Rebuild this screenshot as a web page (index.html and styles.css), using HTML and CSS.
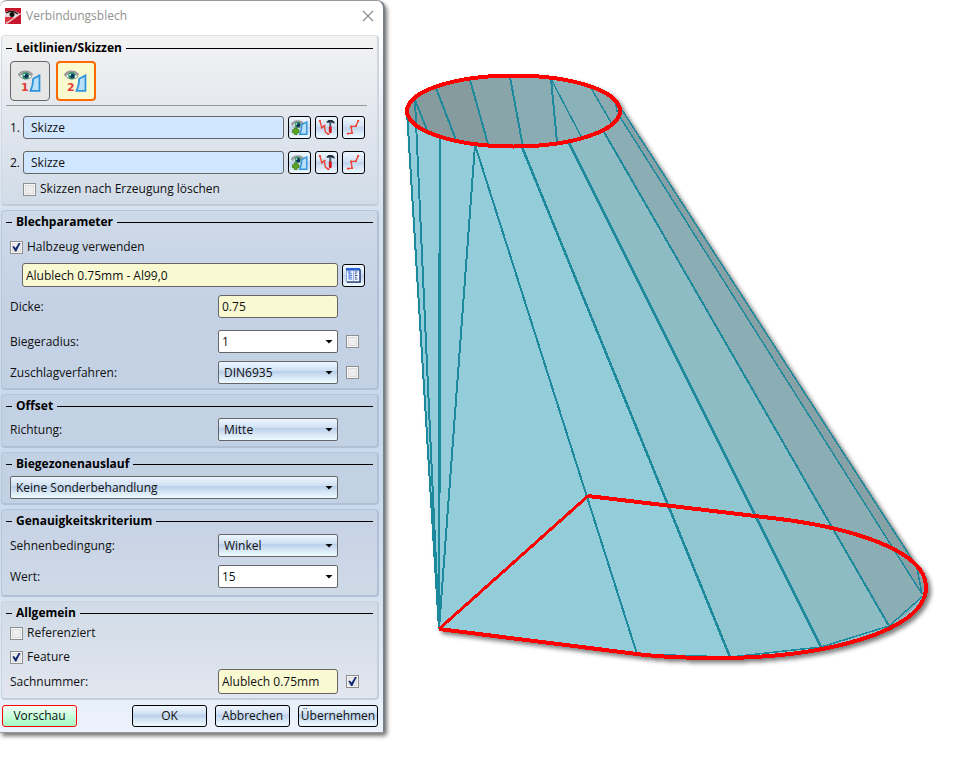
FILE: index.html
```html
<!DOCTYPE html>
<html lang="de">
<head>
<meta charset="utf-8">
<title>Verbindungsblech</title>
<link rel="stylesheet" href="styles.css">
</head>
<body>
<svg class="defs" aria-hidden="true">
  <defs>
    <symbol id="eye" viewBox="0 0 14 9">
      <path d="M0.500 5C3 0.500 10 0 13.500 4.500" fill="none" stroke="#9c9c9c" stroke-width="2"/>
      <path d="M1.500 5.500C4 2 10 2 13 6C10 9 4 9 1.500 5.500Z" fill="#fff" stroke="#66726c" stroke-width=".8"/>
      <circle cx="7.200" cy="5.200" r="3.200" fill="#278b68"/>
      <circle cx="7.700" cy="5.500" r="1.900" fill="#102e64"/>
      <circle cx="5.800" cy="4.300" r=".9" fill="#c9ffe3"/>
    </symbol>
    <symbol id="sheet" viewBox="0 0 11 17">
      <path d="M1.300 16C3 12 3.800 8 3.800 4.500L9.700 1.300V16Z" fill="#b9e0f8" stroke="#2f94dc" stroke-width="1.700"/>
    </symbol>
    <symbol id="pick" viewBox="0 0 18 18">
      <use href="#eye" x="0" y="1" width="14" height="9"/>
      <use href="#sheet" x="8" y="2" width="10" height="15"/>
      <path d="M3.500 9.500h3v2h2v3h-2v2h-3v-2h-2v-3h2z" fill="#58a51f" stroke="#397b12" stroke-width=".8"/>
    </symbol>
    <symbol id="edit" viewBox="0 0 18 18">
      <path d="M2 2L4 9L6.500 7.500L8 14L11 16" fill="none" stroke="#ef4136" stroke-width="1.400"/>
      <path d="M1 1h2v2H1zM3 8h2v2H3zM6 6h2v2H6zM10 15h2v2h-2z" fill="#ef4136"/>
      <path d="M9 3L11 1H15L17.500 3V5L15 4H9Z" fill="#283342"/>
      <path d="M12 4h2v5h-2z" fill="#44566c"/>
      <path d="M11.500 8h3v6q-1.500 2-3 0z" fill="#d3151b"/>
    </symbol>
    <symbol id="line" viewBox="0 0 18 18">
      <path d="M3 15.500L7.500 15L6.500 8L11.500 7.500L14 2" fill="none" stroke="#ef4136" stroke-width="1.400"/>
      <path d="M2 14.500h2v2H2zM6.500 14h2v2h-2zM5.500 7h2v2h-2zM10.500 6.500h2v2h-2zM13 1h2v2h-2z" fill="#ef4136"/>
    </symbol>
  </defs>
</svg>
<main class="app">
  <form class="dialog">
    <header class="titlebar">
      <svg class="logo" viewBox="0 0 16 16" aria-hidden="true">
        <path d="M0 0H16V16H0Z" fill="#c8172c"/>
        <path d="M0 4Q8 0 15 6L9 10L0 9Z" fill="#e4dada"/>
        <path d="M1 5Q7 1 13 6" fill="none" stroke="#2b1719" stroke-width="1.500"/>
        <circle cx="7" cy="6.500" r="2.500" fill="#111"/>
        <path d="M0 15L16 5V6L2 16Z" fill="#fff" opacity=".7"/>
        <path d="M0 9L9 9L0 15Z" fill="#df3345"/>
      </svg>
      <h1>Verbindungsblech</h1>
      <button class="close" type="button" aria-label="Schließen"><svg viewBox="0 0 12 12"><path d="M1 1L11 11M11 1L1 11" stroke="#8d8d8d" stroke-width="1.200"/></svg></button>
    </header>
    <div class="content">
      <section class="group g1">
        <h2>Leitlinien/Skizzen</h2>
        <div class="tools">
          <button class="tool" type="button" aria-label="Leitlinie 1"><svg viewBox="0 0 24 24"><use href="#eye" x="0" y="1" width="15" height="10"/><use href="#sheet" x="11" y="5" width="12" height="18"/><text x="3" y="22">1</text></svg></button>
          <button class="tool active" type="button" aria-label="Leitlinie 2"><svg viewBox="0 0 24 24"><use href="#eye" x="0" y="1" width="15" height="10"/><use href="#sheet" x="11" y="5" width="12" height="18"/><text x="3" y="22">2</text></svg></button>
        </div>
        <div class="sketches">
          <div class="sketch">
            <label for="s1">1.</label><input class="field blue" id="s1" value="Skizze">
            <button class="mini" type="button" aria-label="Skizze 1 wählen"><svg><use href="#pick"/></svg></button>
            <button class="mini" type="button" aria-label="Skizze 1 bearbeiten"><svg><use href="#edit"/></svg></button>
            <button class="mini" type="button" aria-label="Skizze 1 zeichnen"><svg><use href="#line"/></svg></button>
          </div>
          <div class="sketch">
            <label for="s2">2.</label><input class="field blue" id="s2" value="Skizze">
            <button class="mini" type="button" aria-label="Skizze 2 wählen"><svg><use href="#pick"/></svg></button>
            <button class="mini" type="button" aria-label="Skizze 2 bearbeiten"><svg><use href="#edit"/></svg></button>
            <button class="mini" type="button" aria-label="Skizze 2 zeichnen"><svg><use href="#line"/></svg></button>
          </div>
        </div>
        <label class="check indent"><input type="checkbox">Skizzen nach Erzeugung löschen</label>
      </section>

      <section class="group g2">
        <h2>Blechparameter</h2>
        <label class="check"><input type="checkbox" checked>Halbzeug verwenden</label>
        <div class="stock">
          <input class="field yellow" aria-label="Halbzeug" value="Alublech 0.75mm - Al99,0">
          <button class="mini" type="button" aria-label="Katalog"><svg viewBox="0 0 17 17"><path d="M.5 .5H15.500V15.500H.5Z" fill="#f7fbff" stroke="#7c9bd6"/><path d="M0 0H16V3H0Z" fill="#2d61d3"/><path d="M1 16H16V2" fill="none" stroke="#233a6b" stroke-width="1.500"/><path d="M8.500 3V15" stroke="#8fabdf"/><path d="M3.500 4V13M2 4.500H6M4 6.500H7M4 8.500H7M4 10.500H7M4 12.500H7" stroke="#2d65dd" fill="none"/><path d="M10 4.500H13M10 6.500H12M10 8.500H13M10 10.500H12M10 12.500H13" stroke="#1e3c7a"/></svg></button>
        </div>
        <div class="params">
          <div class="row"><label for="dicke">Dicke:</label><input class="field yellow" id="dicke" value="0.75"></div>
          <div class="row"><label for="radius">Biegeradius:</label><span class="select white"><select id="radius"><option>1</option></select></span><input type="checkbox" aria-label="Biegeradius festlegen"></div>
          <div class="row"><label for="verf">Zuschlagverfahren:</label><span class="select"><select id="verf"><option>DIN6935</option></select></span><input type="checkbox" aria-label="Zuschlagverfahren festlegen"></div>
        </div>
      </section>

      <section class="group g3">
        <h2>Offset</h2>
        <div class="row"><label for="richt">Richtung:</label><span class="select"><select id="richt"><option>Mitte</option></select></span></div>
      </section>

      <section class="group g4">
        <h2>Biegezonenauslauf</h2>
        <span class="select wide"><select aria-label="Biegezonenauslauf"><option>Keine Sonderbehandlung</option></select></span>
      </section>

      <section class="group g5">
        <h2>Genauigkeitskriterium</h2>
        <div class="row"><label for="sehne">Sehnenbedingung:</label><span class="select"><select id="sehne"><option>Winkel</option></select></span></div>
        <div class="row tall"><label for="wert">Wert:</label><span class="select white"><select id="wert"><option>15</option></select></span></div>
      </section>

      <section class="group g6">
        <h2>Allgemein</h2>
        <label class="check"><input type="checkbox">Referenziert</label>
        <label class="check"><input type="checkbox" checked>Feature</label>
        <div class="row tall"><label for="sach">Sachnummer:</label><input class="field yellow" id="sach" value="Alublech 0.75mm"><input type="checkbox" checked aria-label="Sachnummer übernehmen"></div>
      </section>

      <footer class="actions">
        <button class="action preview" type="button">Vorschau</button>
        <button class="action" type="button">OK</button>
        <button class="action" type="button">Abbrechen</button>
        <button class="action apply" type="button">Übernehmen</button>
      </footer>
    </div>
  </form>

  <svg class="model" viewBox="385 0 575 758" preserveAspectRatio="xMinYMin meet" role="img" aria-label="Übergangskörper aus Blech">
    <g class="solid">
      <path fill="#92cdd9" d="M407 111L475 145L523 147L621 111L915 563Q926 575 926 588C925 632 822 658 718 658Q670 658 637 654L439 629Z"/>
      <path fill="#90c6d0" d="M522 147L569 143L821 648Q775 658 730 658Z"/>
      <path fill="#8ebcc4" d="M569 143L604 133L889 626Q855 642 821 648Z"/>
      <path fill="#8aaeb4" d="M604 133L621 118L922 596Q912 614 889 626Z"/>
      <path fill="#87a2a7" d="M621 118L621 108L915 562L926 588L922 596Z"/>
      <ellipse cx="513.500" cy="111" rx="106" ry="35" fill="#869b9e"/>
      <path fill="#8aa5aa" d="M470 79Q490 76 510 76L523 146L488 145Z"/>
      <path fill="#8aadb3" d="M510 76Q530 76 551 79L557 144L523 146Z"/>
      <path fill="#8bb2b8" d="M551 79Q572 82 591 88L612 124Q585 142 557 144Z"/>
      <path fill="#8aa9b1" d="M591 88Q618 98 619 111Q619 118 612 124Z"/>
      <g class="edges">
        <path d="M407 112L439 629M415 100L439 629M475 145L439 629M475 145L637 654"/>
        <path class="thick" d="M440 138L439 629M522 147L730 657M569 143L821 647"/>
        <path d="M604 132L889 626M415 100L427 130M436 88L456 140M551 79L557 142M470 80L488 144M510 77L523 147"/>
        <path class="thin" d="M620 117L922 594M622 110L915 564M917 568L922 594M551 79L582 138M591 88L612 124M615 99L617 112M637 654L730 657L821 647L889 626L922 597"/>
      </g>
      <g class="outline">
        <ellipse cx="513.500" cy="111" rx="106.500" ry="35.500"/>
        <path d="M588 496L780 519C850 528 927 550 926 588C925 632 822 658 718 658C690 658 660 657 637 654L439 629"/>
        <path class="diag" d="M439 629L588 496"/>
      </g>
    </g>
  </svg>
</main>
</body>
</html>
```
FILE: styles.css
```css
* { box-sizing: border-box; }

body {
  margin: 0;
  background: #fff;
  color: #101010;
  font: 12px/16px "Open Sans", "Noto Sans", sans-serif;
}

button, input, select { font: inherit; color: inherit; margin: 0; }
.defs { position: absolute; width: 0; height: 0; }
.app { display: flex; align-items: flex-start; min-height: 100vh; }

.dialog {
  flex: 0 0 385px;
  z-index: 1;
  border: 1px solid #999;
  border-left: 0;
  border-right: 2px solid #777f89;
  border-radius: 7px 8px 3px 0;
  background: #fff;
  box-shadow: 2px 3px 4px rgba(0, 0, 0, .55);
}

.titlebar { display: flex; align-items: center; height: 29px; padding: 0 9px 0 5px; gap: 5px; }
.titlebar h1 { flex: 1; margin: 0; font-size: 12px; font-weight: 400; color: #929292; }
.logo { width: 16px; height: 16px; }
.close { width: 12px; height: 12px; padding: 0; border: 0; background: none; }
.close svg { display: block; }

.content {
  display: flex;
  flex-direction: column;
  gap: 4px;
  padding: 5px 4px 5px 1px;
  background: linear-gradient(#fff 0, #e9eef4 12%, #d5e2f0 26%, #c9daee 50%, #c9daee 66%, #d6e3f1 82%, #edf3fc 100%);
}

.group {
  display: flex;
  flex-direction: column;
  padding: 0 4px 4px 4px;
  border: 1px solid #b6c5d8;
  border-right: 2px solid #b2c0d5;
  border-bottom: 2px solid #b2c0d5;
  border-radius: 4px;
  background: #c3d1e5;
}
.g1 { padding-top: 1px; padding-bottom: 8px; background: linear-gradient(#f3f3f3, #e4e8ef 42%, #d1dce8); border-color: #dcdfe4 #d0d6df #c0cbd9 #d2d9e2; }
.g2 { background: linear-gradient(#cedae8, #c5d2e6 50%, #c3d1e5); }
.g3 { padding-bottom: 5px; }
.g5 { padding-bottom: 7px; background: linear-gradient(#c5d2e5, #cfdae7); }
.g6 { background: linear-gradient(#d0dbe7, #e2e6ef); border-color: #c8d3e1 #c5cedb #c5cedb #c8d3e1; }

.group h2 {
  display: flex;
  align-items: center;
  gap: 4px;
  height: 22px;
  margin: 0 0 1px;
  font-size: 12px;
  font-weight: 700;
  color: #000;
}
.group h2::before, .group h2::after { content: ""; height: 1px; background: #000; }
.group h2::before { width: 6px; }
.group h2::after { flex: 1; }

.tools {
  display: flex;
  gap: 6px;
  margin: 1px 6px 0 0;
  padding: 0 0 4px 4px;
  border-bottom: 1px solid #999;
}
.tool { width: 40px; height: 40px; padding: 7px; border: 1px solid #666; border-radius: 4px; background: #e6e6e7; }
.tool.active { padding: 6px; border: 2px solid #ff6a00; background: #fafad0; }
.tool svg, .mini svg { display: block; width: 100%; height: 100%; }
.tool text { font: 700 11px "DejaVu Sans", sans-serif; fill: #e33b36; }

.sketches { display: flex; flex-direction: column; gap: 12px; padding: 10px 8px 8px 4px; }
.sketch { display: flex; gap: 4px; align-items: center; }
.sketch label { width: 9px; white-space: nowrap; }
.sketch .field { flex: 1; }

.field { min-width: 0; height: 23px; padding: 0 3px; border: 1px solid #666; border-radius: 3px; }
.blue { padding: 0 7px; background: #d0e7ff; }
.yellow { background: #fafad2; }

.mini {
  width: 23px;
  height: 23px;
  padding: 2px;
  border: 1px solid #000;
  border-radius: 3px;
  background: linear-gradient(#eef7fe, #d2e1f3 45%, #c0d3ec 50%, #edfaff);
}

.check { display: flex; align-items: center; gap: 4px; height: 14px; margin-left: 4px; }
.indent { margin-left: 17px; }
input[type="checkbox"] {
  appearance: none;
  display: grid;
  place-items: center;
  width: 13px;
  height: 13px;
  border: 1px solid #8e8f8f;
  background: #eee;
  box-shadow: inset 0 0 0 1px #f7f7f7, inset 0 0 0 2px #dcdcdc;
}
input[type="checkbox"]:checked::after {
  content: "";
  width: 9px;
  height: 9px;
  background: #122c72;
  clip-path: polygon(5% 48%, 22% 38%, 40% 62%, 78% 0, 98% 0, 48% 100%, 34% 100%);
}

.g2 > .check { margin-top: 6px; }
.stock { display: flex; gap: 4px; align-items: center; padding: 9px 8px 8px 16px; }
.stock .field { flex: 1; height: 24px; }
.stock .mini { padding: 3px; }
.params { display: flex; flex-direction: column; gap: 8px; }
.params .row:first-child { margin-bottom: 4px; }

.row {
  display: grid;
  grid-template-columns: 1fr 120px 13px;
  gap: 8px;
  align-items: center;
  padding: 0 14px 0 4px;
}
.row label { line-height: 20px; }
.tall .field, .tall select { height: 25px; }

.select { display: grid; align-items: center; }
.select::after {
  content: "";
  grid-area: 1 / 1;
  justify-self: end;
  width: 8px;
  height: 4px;
  margin-right: 5px;
  background: #000;
  clip-path: polygon(0 0, 100% 0, 50% 100%);
  pointer-events: none;
}
.select select {
  appearance: none;
  grid-area: 1 / 1;
  width: 100%;
  height: 23px;
  padding: 0 5px;
  border: 1px solid #666;
  border-radius: 2px;
  background: linear-gradient(#edf6fe, #d0e0f3 40%, #b9cfea 46%, #d5e5f5 70%, #edfcff);
}
.white select { padding: 0 3px; background: #fff; }
.wide { margin: 0 35px 0 4px; }
.g5 { gap: 8px; }
.g5 h2 { margin-bottom: -6px; }
.g6 { gap: 10px; }
.g6 h2 { margin-bottom: -8px; }
.g6 .row { margin-top: -5px; }

.actions { display: flex; gap: 8px; padding: 1px 1px 0 1px; }
.action {
  width: 75px;
  height: 22px;
  padding: 0;
  border: 1px solid #000;
  border-radius: 3px;
  background: linear-gradient(#eef7fe, #d0e0f3 40%, #b9cfea 46%, #d5e5f5 70%, #edfcff);
}
.preview { margin-right: auto; border-color: #f00; background: linear-gradient(#f3fff8, #c8ffdd 50%, #a4fac4); }
.apply { width: 80px; }

.model { flex: 1; min-width: 0; height: auto; overflow: visible; }
.solid { filter: drop-shadow(3px 3px 2px rgba(0, 0, 0, .5)); }
.edges, .outline { fill: none; shape-rendering: crispEdges; }
.edges { stroke: #1c8a9c; stroke-width: 2; }
.edges .thick { stroke-width: 2.5; }
.edges .thin { stroke-width: 1.5; }
.outline { stroke: #f00; stroke-width: 4; stroke-linejoin: round; }
.outline .diag { stroke-width: 3; }
```
